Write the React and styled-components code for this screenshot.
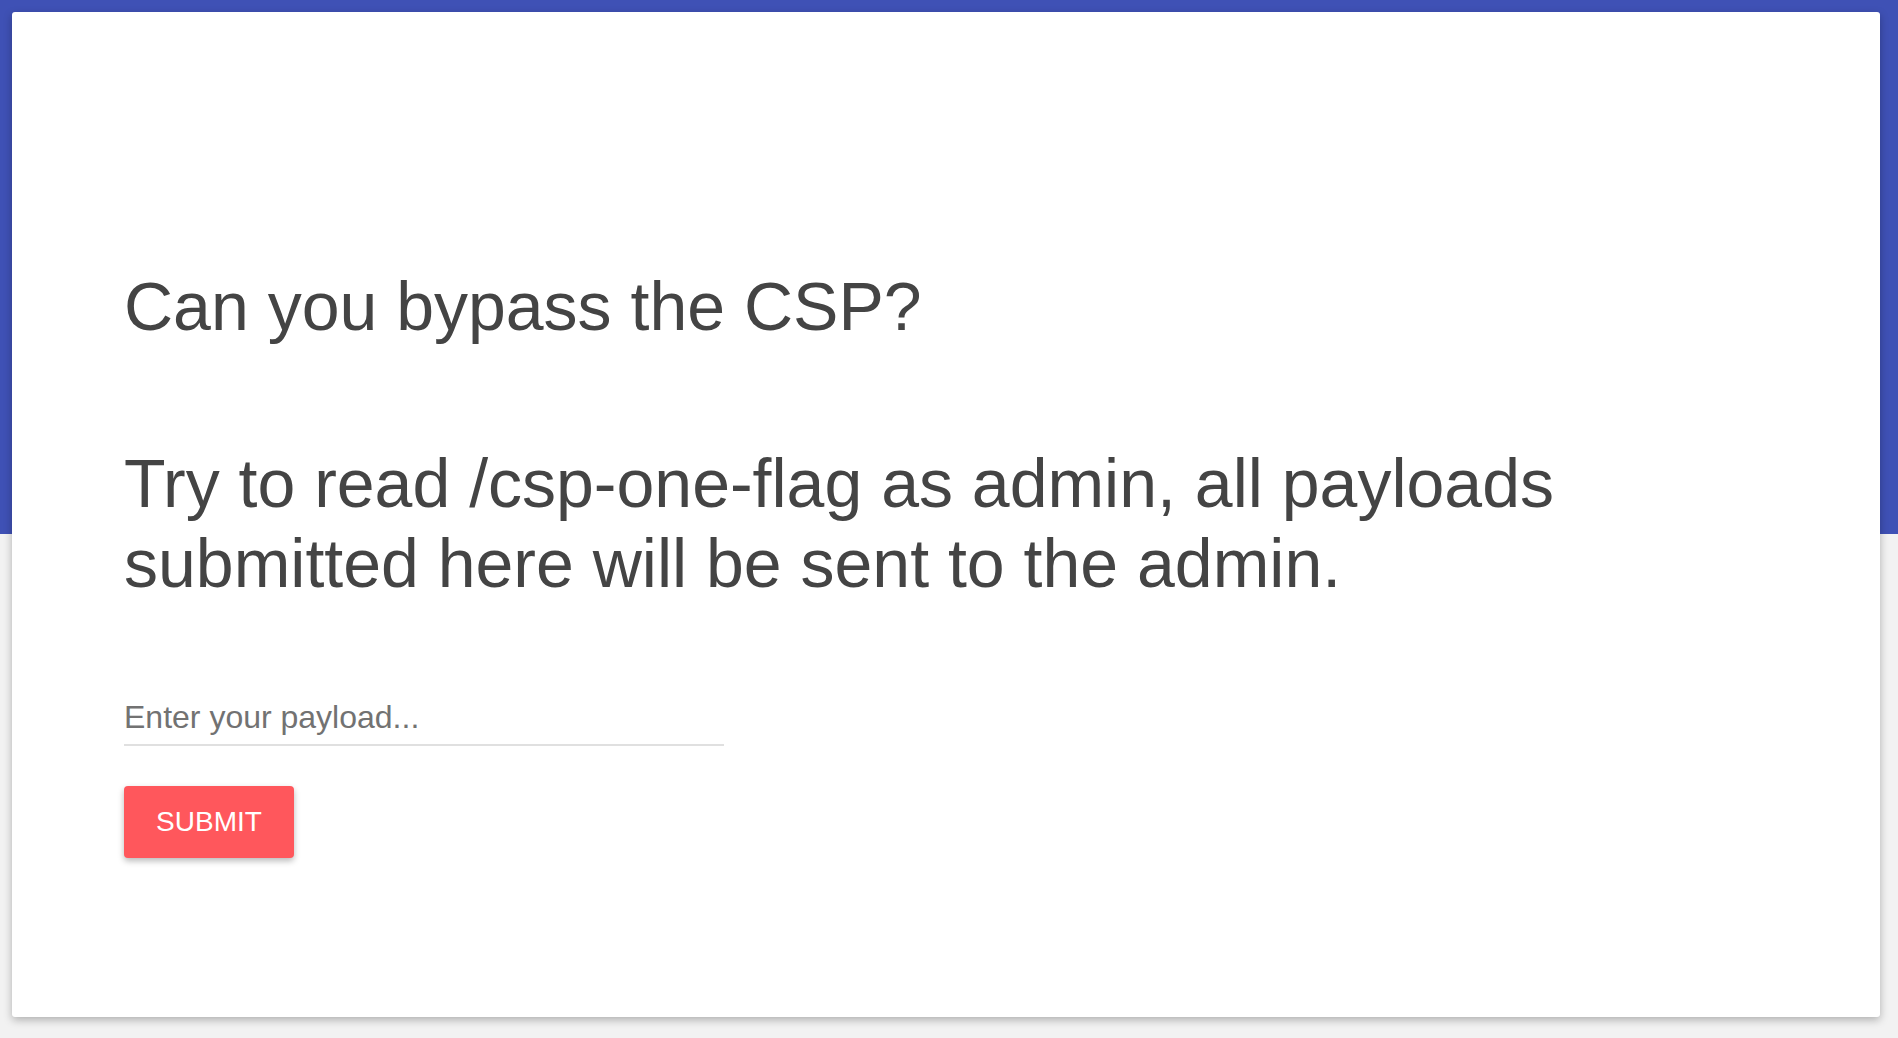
import { useState } from "react";
import styled, { createGlobalStyle } from "styled-components";

const GlobalStyle = createGlobalStyle`
    html, body {
        margin: 0;
        padding: 0;
    }

    body {
        min-height: 100vh;
        font-family: "Liberation Sans", Arial, Helvetica, sans-serif;
        background: linear-gradient(#3f51b5 0, #3f51b5 534px, #f2f2f2 534px, #f2f2f2 100%);
        background-repeat: no-repeat;
        background-color: #f2f2f2;
    }
`;

const App = () => {
    const [payload, setPayload] = useState("");

    return (
        <>
            <GlobalStyle />
            <Page>
                <Card>
                    <Title>Can you bypass the CSP?</Title>
                    <Description>
                        Try to read /csp-one-flag as admin, all payloads submitted here will be sent to the admin.
                    </Description>
                    <Form onSubmit={(e) => e.preventDefault()}>
                        <PayloadInput
                            type="text"
                            placeholder="Enter your payload..."
                            value={payload}
                            onChange={(e) => setPayload(e.currentTarget.value)}
                        />
                        <SubmitButton type="submit">SUBMIT</SubmitButton>
                    </Form>
                </Card>
            </Page>
        </>
    );
}

export default App;

const Page = styled.div`
    padding: 12px 18px 21px 12px;
`;

const Card = styled.div`
    box-sizing: border-box;
    height: 1005px;
    background-color: #fff;
    border-radius: 3px;
    box-shadow: 0 3px 8px rgba(0, 0, 0, 0.28);
    padding: 254px 112px 0 112px;
    display: flex;
    flex-direction: column;
    align-items: flex-start;
`;

const Title = styled.h1`
    margin: 0;
    font-size: 68px;
    line-height: 80px;
    font-weight: 400;
    color: #444;
`;

const Description = styled.p`
    margin: 97px 0 0 0;
    max-width: 1480px;
    font-size: 68px;
    line-height: 80px;
    font-weight: 400;
    color: #444;
`;

const Form = styled.form`
    margin-top: 96px;
    display: flex;
    flex-direction: column;
    align-items: flex-start;
`;

const PayloadInput = styled.input`
    box-sizing: border-box;
    width: 600px;
    margin: 0;
    padding: 0 0 8px 0;
    font-family: "Liberation Sans", Arial, Helvetica, sans-serif;
    font-size: 32px;
    line-height: 37px;
    height: 47px;
    color: #444;
    background: transparent;
    border: none;
    border-bottom: 2px solid #e0e0e0;
    border-radius: 0;

    &::placeholder {
        color: #727272;
    }

    &:focus {
        outline: none;
    }
`;

const SubmitButton = styled.button`
    margin-top: 40px;
    height: 72px;
    width: 170px;
    padding: 0;
    font-family: "Liberation Sans", Arial, Helvetica, sans-serif;
    font-size: 28px;
    color: #fff;
    background-color: #ff575c;
    border: none;
    border-radius: 4px;
    box-shadow: 0 3px 6px rgba(0, 0, 0, 0.28);
    cursor: pointer;
`;
